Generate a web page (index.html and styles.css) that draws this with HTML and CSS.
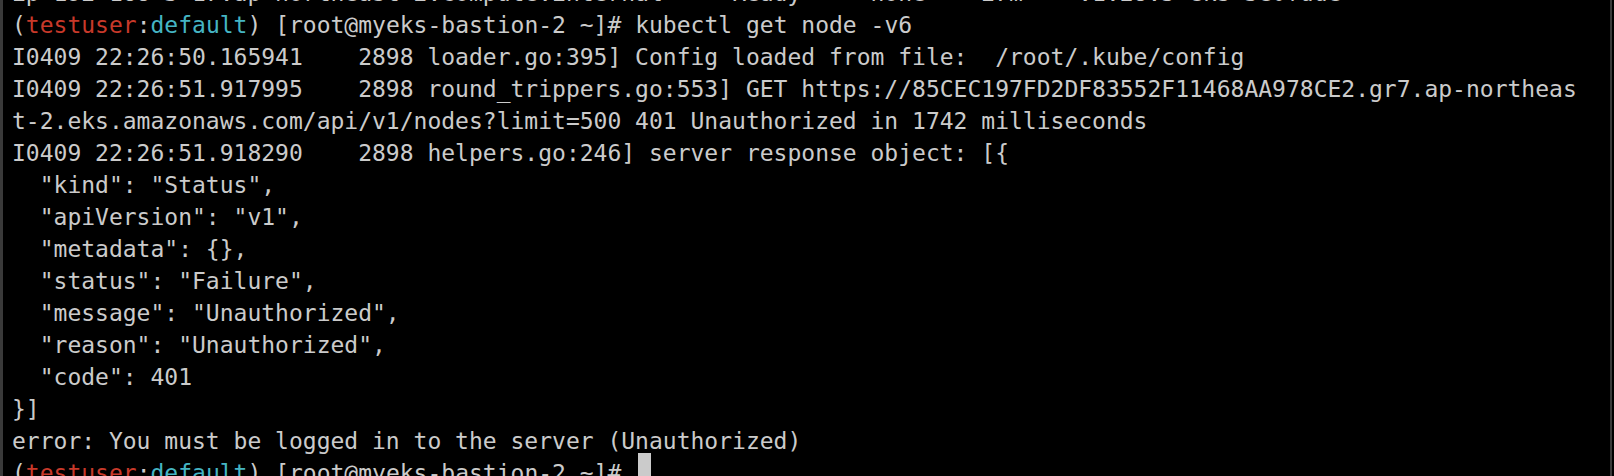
FILE: index.html
```html
<!DOCTYPE html>
<html>
<head>
<meta charset="utf-8">
<link rel="stylesheet" href="styles.css">
</head>
<body>
<div class="term">
<div class="screen">
<div class="line">ip-192-168-3-17.ap-northeast-2.compute.internal     Ready    &lt;none&gt;   27m    v1.28.5-eks-5e0fdde</div>
<div class="line">(<span class="red">testuser</span>:<span class="cyan">default</span>) [root@myeks-bastion-2 ~]# kubectl get node -v6</div>
<div class="line">I0409 22:26:50.165941    2898 loader.go:395] Config loaded from file:  /root/.kube/config</div>
<div class="line">I0409 22:26:51.917995    2898 round_trippers.go:553] GET https://85CEC197FD2DF83552F11468AA978CE2.gr7.ap-northeas</div>
<div class="line">t-2.eks.amazonaws.com/api/v1/nodes?limit=500 401 Unauthorized in 1742 milliseconds</div>
<div class="line">I0409 22:26:51.918290    2898 helpers.go:246] server response object: [{</div>
<div class="line">  "kind": "Status",</div>
<div class="line">  "apiVersion": "v1",</div>
<div class="line">  "metadata": {},</div>
<div class="line">  "status": "Failure",</div>
<div class="line">  "message": "Unauthorized",</div>
<div class="line">  "reason": "Unauthorized",</div>
<div class="line">  "code": 401</div>
<div class="line">}]</div>
<div class="line">error: You must be logged in to the server (Unauthorized)</div>
<div class="line">(<span class="red">testuser</span>:<span class="cyan">default</span>) [root@myeks-bastion-2 ~]# <span class="cursor"> </span></div>
</div>
</div>
</body>
</html>
```

FILE: styles.css
```css
html, body {
  margin: 0;
  padding: 0;
  background: #000;
  height: 100%;
  overflow: hidden;
}

.term {
  height: 100%;
  margin-right: 2px;
  border-left: 3px solid #3a3a3a;
  border-right: 2px solid #3a3a3a;
  padding-left: 9px;
  overflow: hidden;
  background: #000;
}

.screen {
  margin-top: -23px;
  font-family: "DejaVu Sans Mono", "Liberation Mono", monospace;
  font-size: 23px;
  line-height: 32px;
  color: #cbcbcb;
}

.line {
  white-space: pre;
  height: 32px;
}

.red {
  color: #c8392a;
}

.cyan {
  color: #45b5c4;
}

.cursor {
  display: inline-block;
  width: 13px;
  height: 34px;
  vertical-align: top;
  margin-top: -4px;
  margin-left: 3px;
  background: #cbcbcb;
}
```
